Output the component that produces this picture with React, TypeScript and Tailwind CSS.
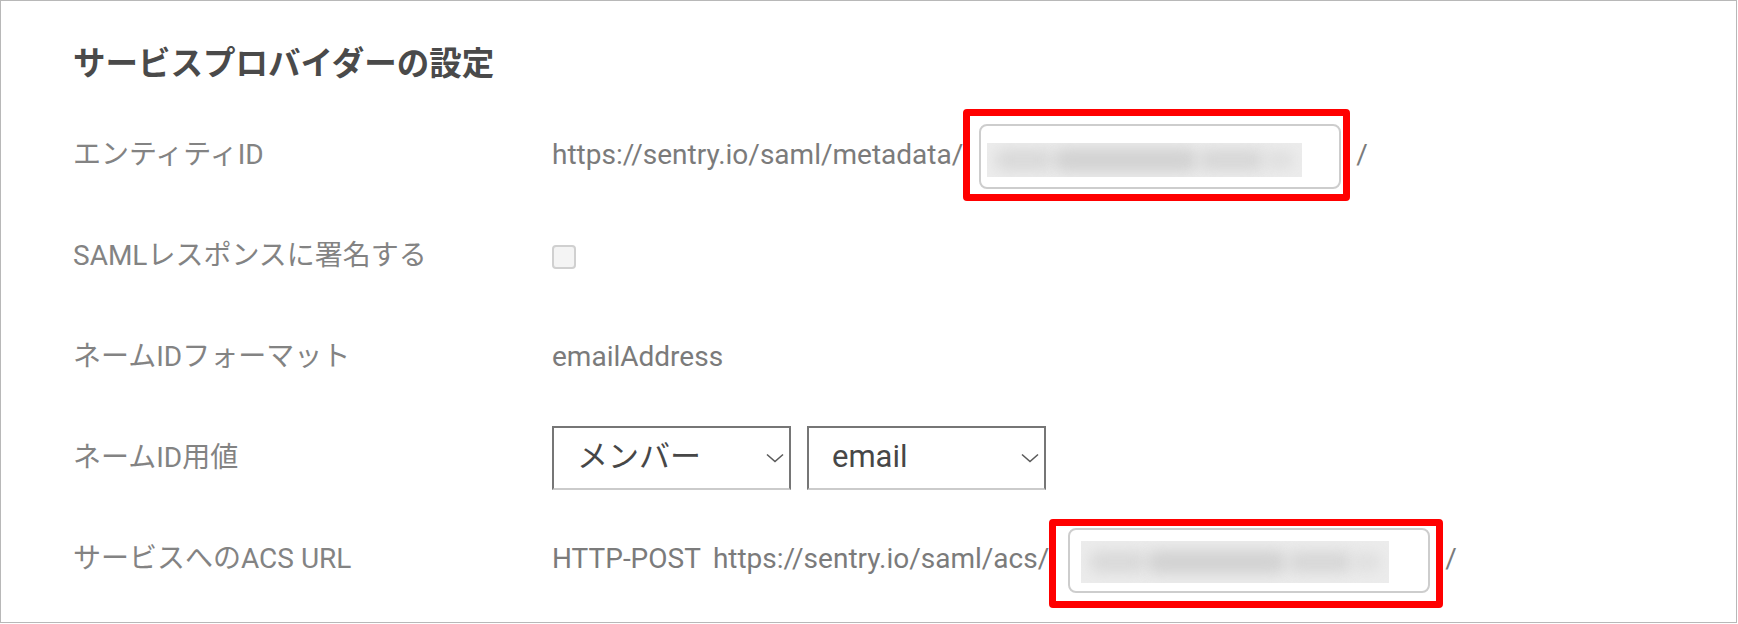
import React from "react";

const Chevron = () => (
  <svg width="18" height="10" viewBox="0 0 18 10" fill="none">
    <path d="M1 1.5 L9 8.5 L17 1.5" stroke="#5a5a5a" strokeWidth="1.6" />
  </svg>
);

const Blurred = () => (
  <div className="flex h-full w-full items-center overflow-hidden bg-[#ececec] px-[8px]">
    <div className="h-[22px] w-[60px] rounded-full bg-[#d9d9d9] blur-[7px]" />
    <div className="h-[24px] w-[150px] rounded-full bg-[#d2d2d2] blur-[7px]" />
    <div className="h-[22px] w-[70px] rounded-full bg-[#d7d7d7] blur-[7px]" />
    <div className="h-[18px] w-[30px] rounded-full bg-[#dedede] blur-[7px]" />
  </div>
);

interface MaskedInputProps {
  boxClass: string;
  innerClass: string;
}

const MaskedInput = ({ boxClass, innerClass }: MaskedInputProps) => (
  <div className={`rounded-[4px] border-[7px] border-[#ff0000] ${boxClass}`}>
    <div className="h-[65px] w-[362px] rounded-[8px] border-2 border-[#cdcdcd] bg-white">
      <div className={innerClass}>
        <Blurred />
      </div>
    </div>
  </div>
);

const Select = ({ value }: { value: string }) => (
  <div className="flex h-[64px] w-[239px] items-center justify-between border-2 border-[#767676] border-b-[#cbcbcb] pl-[23px] pr-[5px] text-[31px] text-[#474747]">
    <span>{value}</span>
    <Chevron />
  </div>
);

const Row = ({ label, children }: { label: string; children: React.ReactNode }) => (
  <div className="flex h-[101px] items-center">
    <div className="w-[479px] text-[#838383]">{label}</div>
    <div className="flex items-center text-[#7b7b7b]">{children}</div>
  </div>
);

export default function App() {
  return (
    <div className="h-[624px] w-[1738px] overflow-hidden bg-white font-['Roboto','Noto_Sans_CJK_JP',sans-serif] text-[28px]">
      <div className="h-[623px] w-[1737px] border border-[#b8b8b8] pl-[72px]">
        <h2 className="mt-[43px] mb-[20px] h-[40px] text-[32.5px] leading-[40px] font-bold text-[#4a4a4a]">
          サービスプロバイダーの設定
        </h2>
        <Row label="エンティティID">
          <span>https://sentry.io/saml/metadata/</span>
          <MaskedInput
            boxClass="mt-[1px] pl-[9px] pr-[2px] pt-[8px] pb-[5px]"
            innerClass="h-[34px] w-[315px] ml-[6px] mt-[17px]"
          />
          <span className="ml-[6px]">/</span>
        </Row>
        <Row label="SAMLレスポンスに署名する">
          <div className="mt-[2px] h-[24px] w-[24px] rounded-[4px] border-2 border-[#d0d0d0] bg-[#f4f4f4]" />
        </Row>
        <Row label="ネームIDフォーマット">
          <span>emailAddress</span>
        </Row>
        <Row label="ネームID用値">
          <div className="flex gap-4">
            <Select value="メンバー" />
            <Select value="email" />
          </div>
        </Row>
        <Row label="サービスへのACS URL">
          <span>HTTP-POST</span>
          <span className="ml-[12px]">https://sentry.io/saml/acs/</span>
          <MaskedInput
            boxClass="mt-[9px] pl-[12px] pr-[6px] pt-[2px] pb-[8px]"
            innerClass="h-[42px] w-[308px] ml-[11px] mt-[11px]"
          />
          <span className="ml-[2px]">/</span>
        </Row>
      </div>
    </div>
  );
}
